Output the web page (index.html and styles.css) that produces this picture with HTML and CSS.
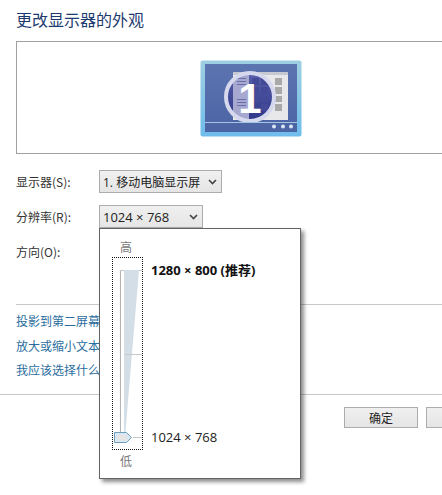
FILE: index.html
```html
<!DOCTYPE html>
<html lang="zh-CN">
<head>
<meta charset="utf-8">
<title>更改显示器的外观</title>
<link rel="stylesheet" href="styles.css">
</head>
<body>
<main class="page">
  <h1 class="title">更改显示器的外观</h1>
  <div class="preview">
    <svg class="monitor" width="102" height="77" viewBox="0 0 102 77">
      <defs>
        <linearGradient id="frame" x1="0" y1="0" x2="0" y2="1">
          <stop offset="0" stop-color="#9fcfe0"/>
          <stop offset="1" stop-color="#6fbcec"/>
        </linearGradient>
        <linearGradient id="screen" x1="0" y1="0" x2="0" y2="1">
          <stop offset="0" stop-color="#5c74b0"/>
          <stop offset="1" stop-color="#4c64a4"/>
        </linearGradient>
        <linearGradient id="core" x1="0" y1="0" x2="0" y2="1">
          <stop offset="0" stop-color="#5a60aa"/>
          <stop offset="1" stop-color="#2c3688"/>
        </linearGradient>
        <clipPath id="disc"><circle cx="50" cy="37" r="24"/></clipPath>
      </defs>
      <rect x="0.5" y="0.5" width="101" height="76" rx="2" fill="url(#frame)"/>
      <rect x="5" y="4" width="92" height="68" fill="url(#screen)"/>
      <rect x="33" y="12" width="55" height="48" fill="#e8e8ea"/>
      <rect x="33" y="12" width="55" height="3" fill="#c6c8d2"/>
      <g fill="#a8a8a8">
        <rect x="75" y="18" width="7" height="7"/>
        <rect x="75" y="27" width="7" height="7"/>
        <rect x="75" y="36" width="7" height="6"/>
        <rect x="75" y="44" width="7" height="7"/>
      </g>
      <circle cx="50" cy="37" r="24" fill="url(#core)"/>
      <g clip-path="url(#disc)">
        <rect x="33" y="12" width="16" height="48" fill="#a6a8d0"/>
        <g fill="#454a98">
          <rect x="52" y="18" width="7" height="7"/><rect x="61" y="18" width="7" height="7"/>
          <rect x="52" y="27" width="7" height="7"/><rect x="61" y="27" width="7" height="7"/>
          <rect x="52" y="36" width="7" height="6"/><rect x="61" y="36" width="7" height="6"/>
          <rect x="61" y="44" width="7" height="7"/>
        </g>
        <g fill="#6a6eaa">
          <rect x="37" y="18" width="9" height="1"/><rect x="37" y="21" width="9" height="1"/>
          <rect x="37" y="24" width="9" height="1"/><rect x="37" y="39" width="9" height="1"/>
          <rect x="37" y="42" width="9" height="1"/><rect x="37" y="45" width="9" height="1"/>
        </g>
      </g>
      <circle cx="50" cy="37" r="24" fill="none" stroke="#d6d8ee" stroke-width="4"/>
      <text class="monitor-num" x="50" y="53" text-anchor="middle">1</text>
      <rect x="5" y="62" width="92" height="1" fill="#a4c4e4"/>
      <g fill="#dce6f4">
        <circle cx="74" cy="66.500" r="2"/><circle cx="83" cy="66.500" r="2"/><circle cx="91" cy="66.500" r="2"/>
      </g>
    </svg>
  </div>

  <div class="form">
    <div class="row">
      <span class="label">显示器(S):</span>
      <div class="select select-display"><span>1. 移动电脑显示屏</span><svg class="chev" width="9" height="6" viewBox="0 0 9 6"><path d="M1 1l3.500 3.500L8 1" fill="none" stroke="#444" stroke-width="1.600"/></svg></div>
    </div>
    <div class="row">
      <span class="label">分辨率(R):</span>
      <div class="select select-res"><span>1024 × 768</span><svg class="chev" width="9" height="6" viewBox="0 0 9 6"><path d="M1 1l3.500 3.500L8 1" fill="none" stroke="#444" stroke-width="1.600"/></svg></div>
    </div>
    <div class="row">
      <span class="label">方向(O):</span>
    </div>
  </div>

  <nav class="links">
    <a class="link">投影到第二屏幕</a>
    <a class="link">放大或缩小文本</a>
    <a class="link">我应该选择什么</a>
  </nav>

  <footer class="footer">
    <button class="btn">确定</button>
    <button class="btn"></button>
  </footer>

  <div class="popup">
    <div class="slider-end slider-high">高</div>
    <div class="slider-focus"></div>
    <svg class="slider" width="31" height="193" viewBox="0 0 31 193">
      <path d="M12 13h15L13 180h-1z" fill="#d3dee6"/>
      <path d="M8.500 13V176" fill="none" stroke="#b4b4b4"/>
      <path d="M8 13.500h4M27 13.500h3M13 97.500h17M21 180.500h9" fill="none" stroke="#c8c8c8"/>
      <path d="M2.500 175.500h12l5 5-5 5h-12z" fill="#dbe6ef" stroke="#6f9fbe"/>
      <ellipse cx="10" cy="180.500" rx="5" ry="2.500" fill="#e8e4e6"/>
    </svg>
    <div class="res res-top">1280 × 800 (推荐)</div>
    <div class="res res-bottom">1024 × 768</div>
    <div class="slider-end slider-low">低</div>
  </div>
</main>
</body>
</html>
```

FILE: styles.css
```css
* { box-sizing: border-box; }
html, body { margin: 0; padding: 0; background: #fff; }
body {
  width: 442px;
  height: 495px;
  overflow: hidden;
  font-family: "Noto Sans CJK SC", "Liberation Sans", sans-serif;
  font-size: 12px;
  color: #222;
}
.page { position: relative; width: 442px; height: 495px; overflow: hidden; }

.title {
  margin: 0;
  padding: 9px 0 0 16px;
  height: 41px;
  font-size: 16px;
  line-height: 20px;
  font-weight: 400;
  color: #1c3a70;
}

.preview {
  margin-left: 16px;
  height: 113px;
  border: 1px solid #a0a0a0;
  border-right: 0;
  display: flex;
  justify-content: flex-start;
  padding: 18px 0 0 183px;
}
.monitor { display: block; }
.monitor-num {
  font-family: "Liberation Sans", sans-serif;
  font-size: 42px;
  font-weight: 700;
  fill: #fff;
}

.form { padding: 16px 0 0 16px; height: 150px; }
.row { display: flex; align-items: center; height: 23px; margin-bottom: 12px; }
.label { width: 83px; font-size: 12px; color: #333; }
.select {
  height: 23px;
  display: flex;
  align-items: center;
  justify-content: space-between;
  padding: 0 4px 0 3px;
  border: 1px solid #acacac;
  background: linear-gradient(#f0f0f0, #e5e5e5);
  color: #222;
  font-family: "Open Sans", "Noto Sans CJK SC", sans-serif;
}
.select-display { width: 123px; font-size: 12px; }
.select-res { width: 104px; font-size: 13px; }
.chev { display: block; }

.links {
  margin-left: 16px;
  border-top: 1px solid #c8c8c8;
  height: 90px;
  padding-top: 4px;
  display: flex;
  flex-direction: column;
}
.link {
  height: 24.500px;
  line-height: 24.500px;
  font-size: 12px;
  color: #2a6d9e;
  white-space: nowrap;
}

.footer {
  border-top: 1px solid #c8c8c8;
  padding: 12px 0 0 344px;
  display: flex;
  gap: 8px;
}
.btn {
  flex: none;
  width: 74px;
  height: 21px;
  padding: 0;
  border: 1px solid #acacac;
  background: linear-gradient(#f0f0f0, #e5e5e5);
  font-family: "Noto Sans CJK SC", sans-serif;
  font-size: 12px;
  line-height: 19px;
  color: #222;
}

.popup {
  position: absolute;
  left: 99px;
  top: 228px;
  width: 202px;
  height: 251px;
  background: #fff;
  border: 1px solid #646464;
  box-shadow: 3px 3px 4px rgba(0, 0, 0, 0.45);
}
.slider-end {
  position: absolute;
  left: 19px;
  width: 14px;
  text-align: center;
  font-size: 12px;
  line-height: 14px;
  color: #777;
}
.slider-high { top: 11px; }
.slider-low { top: 225px; }
.slider-focus {
  position: absolute;
  left: 12px;
  top: 28px;
  width: 31px;
  height: 193px;
  border: 1px dotted #111;
}
.slider { position: absolute; left: 12px; top: 28px; display: block; }
.res {
  position: absolute;
  left: 51px;
  font-family: "Open Sans", "Noto Sans CJK SC", sans-serif;
  font-size: 13px;
  line-height: 14px;
  color: #222;
  white-space: nowrap;
}
.res-top { top: 34px; font-weight: 700; color: #111; }
.res-bottom { top: 201px; }
```
